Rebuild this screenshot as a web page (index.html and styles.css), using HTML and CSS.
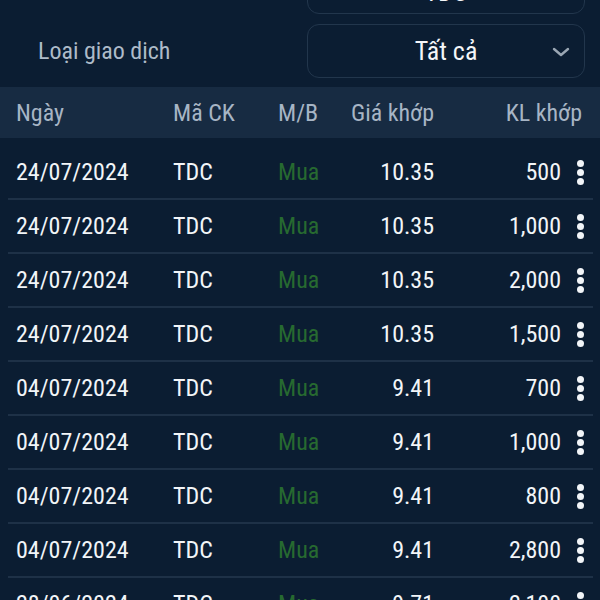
FILE: index.html
```html
<!DOCTYPE html>
<html lang="vi">

<head>
    <meta charset="UTF-8">
    <meta name="viewport" content="width=device-width">
    <title>Lịch sử khớp lệnh</title>
    <link rel="stylesheet" href="styles.css">
</head>

<body>
    <div class="filters">
        <div class="filter-row filter-row--cut">
            <span class="filter-label">Mã CK</span>
            <div class="select">
                <span class="select-value">TDC</span>
                <svg class="chevron" width="18" height="10" viewBox="0 0 18 10"><path d="M2 2l7 6 7-6" fill="none" stroke="currentColor" stroke-width="2.4" stroke-linecap="round" stroke-linejoin="round"/></svg>
            </div>
        </div>
        <div class="filter-row">
            <span class="filter-label">Loại giao dịch</span>
            <div class="select">
                <span class="select-value">Tất cả</span>
                <svg class="chevron" width="18" height="10" viewBox="0 0 18 10"><path d="M2 2l7 6 7-6" fill="none" stroke="currentColor" stroke-width="2.4" stroke-linecap="round" stroke-linejoin="round"/></svg>
            </div>
        </div>
    </div>

    <div class="table">
        <div class="thead">
            <span>Ngày</span>
            <span>Mã CK</span>
            <span>M/B</span>
            <span class="num">Giá khớp</span>
            <span class="num last">KL khớp</span>
        </div>
        <div class="tbody" id="rows"></div>
    </div>

    <script>
        // danh sách lệnh khớp
        var orders = [
            ['24/07/2024', 'TDC', 'Mua', '10.35', '500'],
            ['24/07/2024', 'TDC', 'Mua', '10.35', '1,000'],
            ['24/07/2024', 'TDC', 'Mua', '10.35', '2,000'],
            ['24/07/2024', 'TDC', 'Mua', '10.35', '1,500'],
            ['04/07/2024', 'TDC', 'Mua', '9.41', '700'],
            ['04/07/2024', 'TDC', 'Mua', '9.41', '1,000'],
            ['04/07/2024', 'TDC', 'Mua', '9.41', '800'],
            ['04/07/2024', 'TDC', 'Mua', '9.41', '2,800'],
            ['28/06/2024', 'TDC', 'Mua', '9.71', '2,100']
        ];
        var html = '';
        for (var i = 0; i < orders.length; i++) {
            var o = orders[i];
            html += `
            <div class="row">
                <span>${o[0]}</span>
                <span>${o[1]}</span>
                <span class="buy">${o[2]}</span>
                <span class="num">${o[3]}</span>
                <span class="num">${o[4]}</span>
                <span class="more"><i></i><i></i><i></i></span>
            </div>`;
        }
        document.getElementById('rows').innerHTML = html;
    </script>
</body>

</html>
```

FILE: styles.css
```css
* {
    margin: 0;
    padding: 0;
    box-sizing: border-box;
}
html,
body {
    height: 100%;
}
body {
    overflow: hidden;
    background: #0b1d32;
    color: #f2f5f8;
    font-family: Roboto, "Noto Sans", sans-serif;
    font-stretch: 85%;
}
.filters {
    display: flex;
    flex-direction: column;
    gap: 10px;
    padding: 0 15px 9px 38px;
    margin-top: -40px;
}
.filter-row {
    display: grid;
    grid-template-columns: 1fr 278px;
    align-items: center;
}
.filter-label {
    font-size: 24px;
    color: #aebbc9;
}
.select {
    position: relative;
    height: 54px;
    border: 1.5px solid #22364c;
    border-radius: 12px;
    display: flex;
    align-items: center;
    justify-content: center;
}
.select-value {
    font-size: 26px;
    color: #f4f6f9;
}
.filter-row--cut .select-value {
    padding-top: 10px;
}
.chevron {
    position: absolute;
    right: 14px;
    top: 22px;
    color: #9aa6b3;
}
.thead,
.row {
    display: grid;
    grid-template-columns: 157px 105px 56px 100px 127px 28px;
    align-items: center;
    padding: 0 11px 0 16px;
}
.thead {
    height: 51px;
    background: #172b42;
    color: #a7b5c5;
    font-size: 24px;
}
.thead .last {
    grid-column: 5 / 7;
    padding-right: 7px;
}
.tbody {
    padding: 8px 7px 0 8px;
}
.row {
    height: 54px;
    padding: 0 4px 0 8px;
    font-size: 24px;
    border-bottom: 2px solid #1e3147;
}
.num {
    text-align: right;
}
.buy {
    color: #276a30;
}
.more {
    display: flex;
    flex-direction: column;
    align-items: flex-end;
    gap: 2px;
    padding-right: 5px;
}
.more i {
    width: 7px;
    height: 7px;
    border-radius: 50%;
    background: #f2f5f8;
}
```
